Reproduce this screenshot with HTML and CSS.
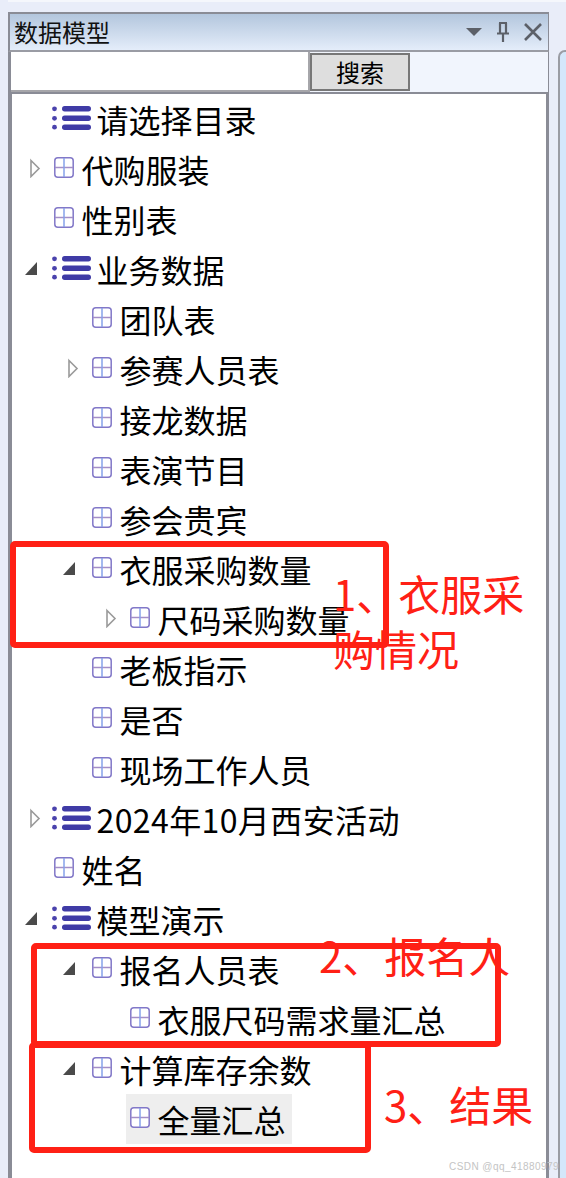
FILE: index.html
```html
<!DOCTYPE html>
<html lang="zh-CN">
<head>
<meta charset="utf-8">
<title>数据模型</title>
<link rel="stylesheet" href="styles.css">
</head>
<body>
<svg class="defs" width="0" height="0" aria-hidden="true">
  <symbol id="grid" viewBox="0 0 20 21">
    <rect x=".8" y=".8" width="18.4" height="19.4" rx="3" fill="#fff" stroke="#8278c8" stroke-width="1.5"/>
    <path d="M1 10.5H19" stroke="#a48fc8" stroke-width="1.5"/>
    <path d="M10 1V20" stroke="#86a2ea" stroke-width="1.5"/>
  </symbol>
  <symbol id="list" viewBox="0 0 39 24">
    <circle cx="2.5" cy="2.8" r="2.4" fill="#4a42ad"/>
    <circle cx="2.5" cy="12.3" r="2.4" fill="#4a42ad"/>
    <circle cx="2.5" cy="21.2" r="2.4" fill="#4a42ad"/>
    <rect x="10" y="0" width="29" height="5.4" rx="2.7" fill="#3f3ba6"/>
    <rect x="10" y="9.6" width="29" height="5.4" rx="2.7" fill="#3f3ba6"/>
    <rect x="10" y="18.6" width="29" height="5.4" rx="2.7" fill="#3f3ba6"/>
  </symbol>
  <symbol id="closed" viewBox="0 0 16 20">
    <path d="M6 2.5L14 10.5L6 18.5Z" fill="#fff" stroke="#9a9a9a" stroke-width="1.6"/>
  </symbol>
  <symbol id="open" viewBox="0 0 16 20">
    <path d="M0 17H12V4Z" fill="#4a4a4a"/>
  </symbol>
</svg>

<div class="topstrip"></div>
<div class="shell">
  <section class="panel">
    <header class="titlebar">
      <h1 class="title">数据模型</h1>
      <div class="tools">
        <svg class="tool" width="16" height="20" viewBox="0 0 16 20"><path d="M0 6H16L8 14Z" fill="#5c6068"/></svg>
        <svg class="tool" width="14" height="20" viewBox="0 0 14 20"><path d="M3 1H11M4 1V11M10 1V11M1 11.5H13M7 12V20" fill="none" stroke="#5c6068" stroke-width="2.2"/></svg>
        <svg class="tool" width="18" height="18" viewBox="0 0 18 18"><path d="M1 1L17 17M17 1L1 17" fill="none" stroke="#5c6068" stroke-width="2.6"/></svg>
      </div>
    </header>
    <div class="searchbar">
      <input class="searchinput" type="text" aria-label="搜索">
      <button class="searchbutton" type="button">搜索</button>
    </div>
    <div class="tree">
      <div class="row"><span class="toggle"></span><svg class="icon-list"><use href="#list"/></svg><span class="label">请选择目录</span></div>
      <div class="row"><span class="toggle"><svg class="arrow"><use href="#closed"/></svg></span><svg class="icon-grid"><use href="#grid"/></svg><span class="label">代购服装</span></div>
      <div class="row"><span class="toggle"></span><svg class="icon-grid"><use href="#grid"/></svg><span class="label">性别表</span></div>
      <div class="row"><span class="toggle"><svg class="arrow"><use href="#open"/></svg></span><svg class="icon-list"><use href="#list"/></svg><span class="label">业务数据</span></div>
      <div class="row lv1"><span class="toggle"></span><svg class="icon-grid"><use href="#grid"/></svg><span class="label">团队表</span></div>
      <div class="row lv1"><span class="toggle"><svg class="arrow"><use href="#closed"/></svg></span><svg class="icon-grid"><use href="#grid"/></svg><span class="label">参赛人员表</span></div>
      <div class="row lv1"><span class="toggle"></span><svg class="icon-grid"><use href="#grid"/></svg><span class="label">接龙数据</span></div>
      <div class="row lv1"><span class="toggle"></span><svg class="icon-grid"><use href="#grid"/></svg><span class="label">表演节目</span></div>
      <div class="row lv1"><span class="toggle"></span><svg class="icon-grid"><use href="#grid"/></svg><span class="label">参会贵宾</span></div>
      <div class="row lv1"><span class="toggle"><svg class="arrow"><use href="#open"/></svg></span><svg class="icon-grid"><use href="#grid"/></svg><span class="label">衣服采购数量</span></div>
      <div class="row lv2"><span class="toggle"><svg class="arrow"><use href="#closed"/></svg></span><svg class="icon-grid"><use href="#grid"/></svg><span class="label">尺码采购数量</span></div>
      <div class="row lv1"><span class="toggle"></span><svg class="icon-grid"><use href="#grid"/></svg><span class="label">老板指示</span></div>
      <div class="row lv1"><span class="toggle"></span><svg class="icon-grid"><use href="#grid"/></svg><span class="label">是否</span></div>
      <div class="row lv1"><span class="toggle"></span><svg class="icon-grid"><use href="#grid"/></svg><span class="label">现场工作人员</span></div>
      <div class="row"><span class="toggle"><svg class="arrow"><use href="#closed"/></svg></span><svg class="icon-list"><use href="#list"/></svg><span class="label label-wide">2024年10月西安活动</span></div>
      <div class="row"><span class="toggle"></span><svg class="icon-grid"><use href="#grid"/></svg><span class="label">姓名</span></div>
      <div class="row"><span class="toggle"><svg class="arrow"><use href="#open"/></svg></span><svg class="icon-list"><use href="#list"/></svg><span class="label">模型演示</span></div>
      <div class="row lv1"><span class="toggle"><svg class="arrow"><use href="#open"/></svg></span><svg class="icon-grid"><use href="#grid"/></svg><span class="label">报名人员表</span></div>
      <div class="row lv2"><span class="toggle"></span><svg class="icon-grid"><use href="#grid"/></svg><span class="label">衣服尺码需求量汇总</span></div>
      <div class="row lv1"><span class="toggle"><svg class="arrow"><use href="#open"/></svg></span><svg class="icon-grid"><use href="#grid"/></svg><span class="label">计算库存余数</span></div>
      <div class="row lv2"><span class="toggle"></span><div class="selected"><svg class="icon-grid"><use href="#grid"/></svg><span class="label">全量汇总</span></div></div>
    </div>
  </section>
  <aside class="sidepanel"></aside>
</div>

<div class="mark mark-1"></div>
<div class="mark mark-2"></div>
<div class="mark mark-3"></div>
<div class="note note-1">1、衣服采购情况</div>
<div class="note note-2">2、报名人</div>
<div class="note note-3">3、结果</div>
<div class="watermark">CSDN @qq_41880979</div>
</body>
</html>
```
FILE: styles.css
```css
* { box-sizing: border-box; }

html, body {
  margin: 0;
  height: 100%;
  overflow: hidden;
}

body {
  position: relative;
  display: flex;
  flex-direction: column;
  background: #e9edf9;
  font-family: "Noto Sans CJK SC", "Noto Sans", sans-serif;
  color: #000;
}

.defs { position: absolute; }

.topstrip {
  height: 2px;
  margin: 0 0 10px 8px;
  background: #f5f7fc;
}

.shell {
  flex: 1;
  display: flex;
  min-height: 0;
}

.panel {
  flex: none;
  width: 541px;
  margin-left: 8px;
  display: flex;
  flex-direction: column;
  border-top: 2px solid #8a8c96;
}

.titlebar {
  height: 38px;
  display: flex;
  align-items: center;
  justify-content: space-between;
  padding: 0 6px 0 4px;
  background: linear-gradient(#b3c6dd, #e4edfa);
  border-left: 2px solid #8a8c96;
  border-right: 1px solid #8a8c96;
  border-bottom: 2px solid #9a9ca4;
}

.title {
  margin: 0;
  font-size: 24px;
  font-weight: 400;
  line-height: 36px;
  color: #111;
}

.tools {
  display: flex;
  align-items: center;
  gap: 14px;
}

.tool { display: block; }

.searchbar {
  height: 42px;
  display: flex;
  align-items: flex-start;
  background: #f1f5fd;
  border-left: 3px solid #8a8c96;
  border-right: 1px solid #8a8c96;
  border-bottom: 2px solid #8a8c96;
}

.searchinput {
  width: 299px;
  height: 40px;
  padding: 0;
  background: #fff;
  border: 0;
  border-right: 2px solid #a6a6aa;
  border-bottom: 2px solid #a6a6aa;
  outline: 0;
}

.searchbutton {
  width: 100px;
  height: 38px;
  margin-top: 1px;
  padding: 0;
  background: #dedede;
  border: 2px solid #777;
  font-family: inherit;
  font-size: 24px;
  line-height: 32px;
  color: #000;
}

.tree {
  flex: 1;
  background: #fff;
  border-left: 4px solid #8a8c96;
  border-right: 3px solid #8a8c96;
}

.row {
  height: 50px;
  display: flex;
  align-items: center;
  padding-left: 13px;
}

.lv1 { padding-left: 51px; }
.lv2 { padding-left: 89px; }

.toggle {
  flex: none;
  width: 29px;
  height: 20px;
  margin-top: -3px;
}

.arrow {
  display: block;
  width: 16px;
  height: 20px;
}

.icon-grid {
  flex: none;
  width: 20px;
  height: 21px;
  margin: -3px 7.5px 0 0;
}

.icon-list {
  flex: none;
  width: 39px;
  height: 24px;
  margin: -2px 5.5px 0 -2px;
}

.label {
  font-size: 32px;
  line-height: 50px;
  white-space: nowrap;
}

.label-wide { letter-spacing: .4px; }

.selected {
  height: 50px;
  width: 166px;
  margin-left: -4px;
  padding-left: 4px;
  display: flex;
  align-items: center;
  background: #eee;
}

.mark {
  position: absolute;
  border: 6px solid #ff2015;
  border-radius: 5px;
}

.mark-1 { left: 10px; top: 541px; width: 379px; height: 107px; }
.mark-2 { left: 31px; top: 943px; width: 470px; height: 104px; }
.mark-3 { left: 29px; top: 1042px; width: 342px; height: 111px; }

.note {
  position: absolute;
  font-size: 42px;
  font-weight: 400;
  line-height: 55px;
  color: #ff2015;
}

.note-1 { left: 333px; top: 565px; width: 200px; }
.note-2 { left: 319px; top: 927px; white-space: nowrap; }
.note-3 { left: 384px; top: 1076px; white-space: nowrap; }

.watermark {
  position: absolute;
  left: 449px;
  top: 1160px;
  font-family: "Liberation Sans", sans-serif;
  font-size: 10px;
  line-height: 14px;
  letter-spacing: .45px;
  white-space: nowrap;
  color: #c4c4c4;
}

.sidepanel {
  flex: 1;
  margin: 38px 0 0 9px;
  background: #d4e7fb;
  border-left: 2px solid #9a9ca4;
  border-top: 2px solid #9a9ca4;
  border-top-left-radius: 7px;
}
```
